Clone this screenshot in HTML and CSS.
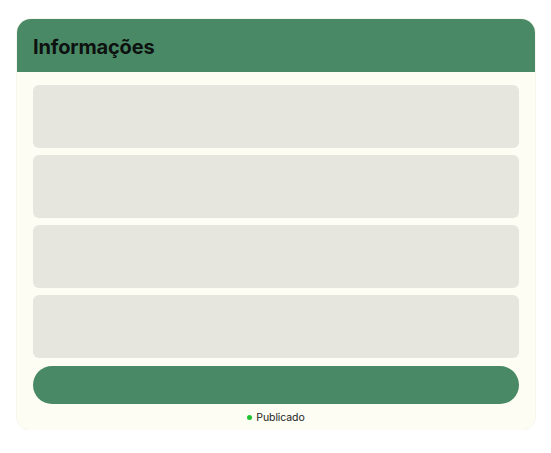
FILE: index.html
```html
<!DOCTYPE html>
<html lang="pt">
<head>
<meta charset="utf-8">
<link rel="stylesheet" href="styles.css">
</head>
<body>
<div class="card">
  <div class="card-header"><h1 class="title">Informações</h1></div>
  <div class="card-body">
    <div class="field"></div>
    <div class="field"></div>
    <div class="field"></div>
    <div class="field"></div>
    <button class="action" type="button"></button>
    <div class="status"><span class="dot"></span><span class="status-text">Publicado</span></div>
  </div>
</div>
</body>
</html>
```

FILE: styles.css
```css
html, body {
  margin: 0;
  padding: 0;
  background: #ffffff;
}
body {
  padding: 19px 16px 0 17px;
  font-family: Inter, "Noto Sans", "Liberation Sans", sans-serif;
}
.card {
  width: 518px;
  border-radius: 14px;
  overflow: hidden;
  background: #fdfdf4;
  box-shadow: 0 0 0 1px #f6f6ee;
}
.card-header {
  height: 53px;
  box-sizing: border-box;
  background: #4a8966;
  display: flex;
  align-items: center;
  padding: 3px 16px 0 16px;
}
.title {
  margin: 0;
  font-size: 20px;
  font-weight: 700;
  color: #0d110f;
  letter-spacing: -0.15px;
}
.card-body {
  padding: 13px 16px 6px 16px;
  display: flex;
  flex-direction: column;
  gap: 7px;
}
.field {
  height: 63px;
  background: #e7e6de;
  border-radius: 6px;
}
.action {
  margin-top: 1px;
  height: 38px;
  border: none;
  border-radius: 19px;
  background: #4a8966;
  padding: 0;
}
.status {
  display: flex;
  align-items: center;
  justify-content: center;
  gap: 4px;
  height: 14px;
  margin-top: -1px;
}
.dot {
  width: 5px;
  height: 5px;
  border-radius: 50%;
  background: #1fc22f;
}
.status-text {
  font-size: 10.5px;
  letter-spacing: -0.1px;
  color: #222;
}
```
